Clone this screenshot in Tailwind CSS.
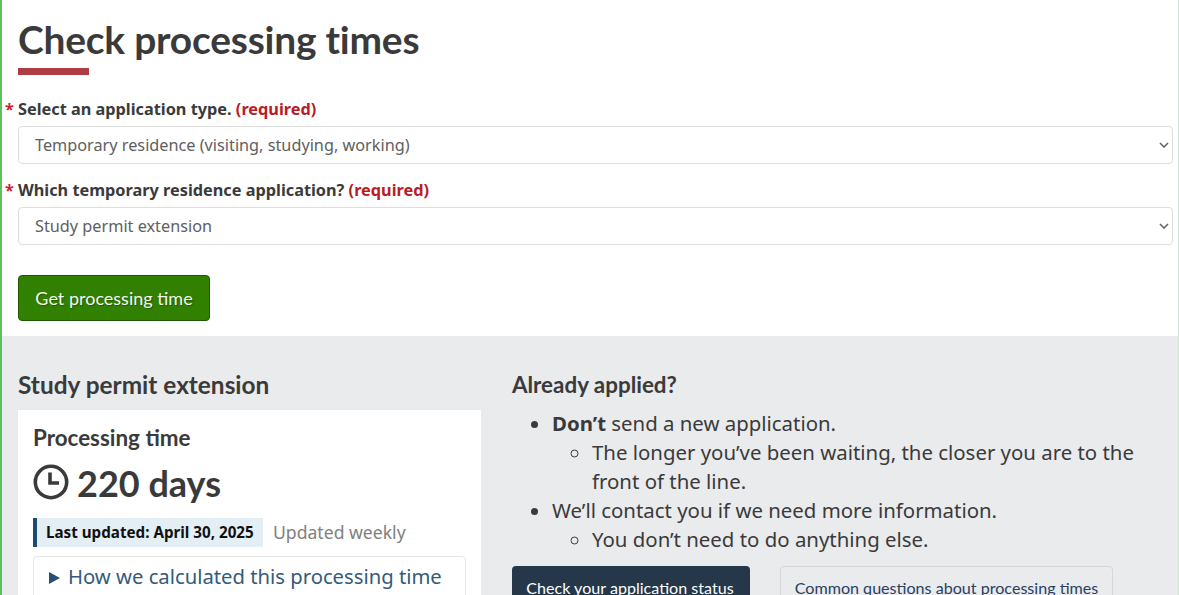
<!DOCTYPE html>
<html lang="en">
<head>
    <meta charset="UTF-8">
    <meta name="viewport" content="width=device-width, initial-scale=1.0">
    <title>Check processing times</title>
    <script src="https://cdn.jsdelivr.net/npm/@tailwindcss/browser@4"></script>
</head>
<body class="h-[595px] overflow-hidden bg-white font-['Noto_Sans',sans-serif] text-[#333]">
    <div class="h-[595px] overflow-hidden border-l-2 border-r border-l-[#5cc05c] border-r-[#cfe8cf]">
        <!-- form -->
        <section class="h-[336px] pl-4 pr-[5px] pt-[14px]">
            <h1 class="font-['Lato',sans-serif] text-[38.9px] font-bold leading-[50px] tracking-[-0.2px] text-[#3a3a3a]">Check processing times</h1>
            <div class="mt-[4px] h-[7px] w-[71px] bg-[#af3c43]"></div>

            <label class="relative mt-[24px] block text-[16.3px] font-bold leading-5 text-[#3a3a3a]">
                <span class="absolute left-[-13px] text-[#c8242c]">*</span>
                Select an application type. <span class="text-[#b91c24]">(required)</span>
            </label>
            <div class="relative mt-[7px]">
                <select class="block h-[38px] w-full appearance-none rounded-[4px] border border-[#dedede] bg-white pl-4 pr-6 text-[16.25px] text-[#606060]">
                    <option>Temporary residence (visiting, studying, working)</option>
                </select>
                <svg class="pointer-events-none absolute right-[4px] top-[16px] h-[6px] w-[10px]" viewBox="0 0 10 6" fill="none" stroke="#666" stroke-width="1.6"><path d="M1 1l4 4 4-4"></path></svg>
            </div>

            <label class="relative mt-[16px] block text-[16.3px] font-bold leading-5 text-[#3a3a3a]">
                <span class="absolute left-[-13px] text-[#c8242c]">*</span>
                Which temporary residence application? <span class="text-[#b91c24]">(required)</span>
            </label>
            <div class="relative mt-[7px]">
                <select class="block h-[38px] w-full appearance-none rounded-[4px] border border-[#dedede] bg-white pl-4 pr-6 text-[16.25px] text-[#606060]">
                    <option>Study permit extension</option>
                </select>
                <svg class="pointer-events-none absolute right-[4px] top-[16px] h-[6px] w-[10px]" viewBox="0 0 10 6" fill="none" stroke="#666" stroke-width="1.6"><path d="M1 1l4 4 4-4"></path></svg>
            </div>

            <button class="mt-[30px] h-[46px] w-[192px] rounded-[4px] border border-[#1f5a00] bg-[#318000] font-['Lato',sans-serif] text-[18px] text-[#f4f8f0] [text-shadow:1px_1px_1px_#1f5a00]">Get processing time</button>
        </section>

        <!-- results -->
        <section class="flex h-[259px] gap-[31px] bg-[#e9ebed] pl-4">
            <div class="w-[463px] shrink-0">
                <h2 class="mt-[34px] font-['Lato',sans-serif] text-[24.4px] font-bold leading-[30px] text-[#3a3a3a]">Study permit extension</h2>
                <div class="mt-[10px] h-[300px] bg-white px-[15px] pt-[14px]">
                    <h3 class="font-['Lato',sans-serif] text-[22.4px] font-bold leading-[28px] text-[#3a3a3a]">Processing time</h3>
                    <div class="mt-[9px] flex h-[44px] items-center gap-[8px]">
                        <svg class="h-[36px] w-[36px] -translate-y-[1px]" viewBox="0 0 36 36" fill="none" stroke="#3a3a3a" stroke-width="3.6">
                            <circle cx="18" cy="18" r="15.7"></circle>
                            <path d="M17 8.5V19H26"></path>
                        </svg>
                        <span class="font-['Lato',sans-serif] text-[36px] font-bold leading-[44px] text-[#3a3a3a]">220 days</span>
                    </div>
                    <div class="mt-[13px] flex items-center">
                        <span class="h-[29px] w-[230px] border-l-[4px] border-l-[#1b4b75] bg-[#e4eff5] pl-[9px] text-[15.2px] font-bold leading-[29px] text-[#111]">Last updated: April 30, 2025</span>
                        <span class="ml-[10px] text-[17.6px] text-[#808080]">Updated weekly</span>
                    </div>
                    <div class="mt-[9px] h-[60px] w-[433px] rounded-[4px] border border-[#e5e5e5] bg-white pl-[15px] pt-[5px] text-[20.25px] leading-7 text-[#355a7a]">
                        <span class="mr-[8px] inline-block h-0 w-0 border-y-[6px] border-l-[11px] border-y-transparent border-l-[#284e73]"></span>How we calculated this processing time
                    </div>
                </div>
            </div>

            <div class="min-w-0 flex-1 pr-[40px]">
                <h2 class="mt-[35px] font-['Lato',sans-serif] text-[22.4px] font-bold leading-[28px] text-[#3a3a3a]">Already applied?</h2>
                <ul class="mt-[10px] list-disc pl-[40px] text-[20.4px] leading-[29px] text-[#3a3a3a]">
                    <li><strong>Don’t</strong> send a new application.
                        <ul class="list-[circle] pl-[40px]">
                            <li>The longer you’ve been waiting, the closer you are to the front of the line.</li>
                        </ul>
                    </li>
                    <li>We’ll contact you if we need more information.
                        <ul class="list-[circle] pl-[40px]">
                            <li>You don’t need to do anything else.</li>
                        </ul>
                    </li>
                </ul>
                <div class="mt-[12px] flex gap-[30px] font-['Lato',sans-serif] text-[16.1px]">
                    <button class="h-[46px] w-[238px] shrink-0 rounded-[4px] bg-[#26374a] pb-[2px] pr-[2px] text-white">Check your application status</button>
                    <button class="h-[46px] w-[333px] shrink-0 rounded-[4px] border border-[#d5d8db] bg-[#eaebed] pb-[2px] text-[#284162]">Common questions about processing times</button>
                </div>
            </div>
        </section>
    </div>
</body>
</html>
